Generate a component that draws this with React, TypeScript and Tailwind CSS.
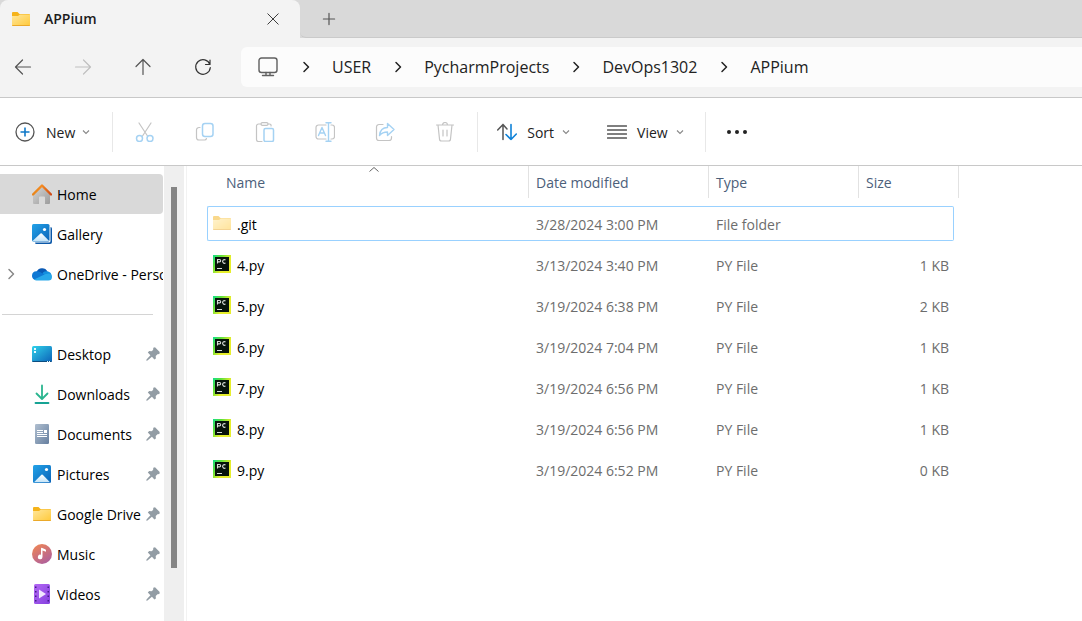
import React, { Fragment, type ReactNode } from "react";

type IconProps = { className?: string };

const FolderIcon = ({ faded = false }: { faded?: boolean }) => (
  <svg width="20" height="20" viewBox="0 0 20 20" className={faded ? "opacity-50" : ""} aria-hidden="true">
    <defs>
      <linearGradient id="folder-front" x1="0" y1="0" x2="1" y2="1">
        <stop offset="0" stopColor="#ffe79c" />
        <stop offset="1" stopColor="#ffc93a" />
      </linearGradient>
    </defs>
    <path d="M1 4a1 1 0 0 1 1-1h4.500l2 2H18a1 1 0 0 1 1 1v3H1z" fill="#f5b31a" />
    <path d="M1 7h6l2-1.500h10V16a1 1 0 0 1-1 1H2a1 1 0 0 1-1-1z" fill="url(#folder-front)" />
    <path d="M1 16a1 1 0 0 0 1 1h16a1 1 0 0 0 1-1z" fill="#eba92a" />
  </svg>
);

const PyCharmIcon = () => (
  <svg width="18" height="18" viewBox="0 0 18 18" aria-hidden="true">
    <defs>
      <linearGradient id="pc-edge" x1="0" y1="0" x2="0.700" y2="0.500">
        <stop offset="0" stopColor="#10e08c" />
        <stop offset="0.450" stopColor="#5be03a" />
        <stop offset="1" stopColor="#e6ee2c" />
      </linearGradient>
    </defs>
    <path d="M0 0h18v18H0z" fill="url(#pc-edge)" />
    <path d="M2 2h14v14H2z" fill="#06120a" />
    <path d="M4.500 8.500V4.500h2a1.200 1.200 0 0 1 0 2.400h-2M12.500 5a1.800 1.800 0 1 0 0 2.900" fill="none" stroke="#d8dcd8" strokeWidth="1.100" />
    <path d="M4 13.500h5" stroke="#d8dcd8" strokeWidth="1" />
  </svg>
);

const HomeIcon = () => (
  <svg width="20" height="20" viewBox="0 0 20 20" aria-hidden="true">
    <defs>
      <linearGradient id="home-wall" x1="0" y1="0" x2="1" y2="1">
        <stop offset="0" stopColor="#d6d6d6" />
        <stop offset="1" stopColor="#9c9c9c" />
      </linearGradient>
      <linearGradient id="home-roof" x1="0" y1="0" x2="1" y2="0">
        <stop offset="0" stopColor="#e8861c" />
        <stop offset="0.500" stopColor="#f58a1f" />
        <stop offset="1" stopColor="#cf4a18" />
      </linearGradient>
    </defs>
    <path d="M10 2 18 9.500V19a1 1 0 0 1-1 1h-4v-6.500a1 1 0 0 0-1-1H8a1 1 0 0 0-1 1V20H2a1 1 0 0 1-1-1V9.500z" fill="url(#home-wall)" />
    <path d="m1 10.500 9-9 9 9" fill="none" stroke="url(#home-roof)" strokeWidth="2.400" strokeLinecap="round" strokeLinejoin="round" />
  </svg>
);

const PictureIcon = ({ stacked = false }: { stacked?: boolean }) => (
  <svg width="20" height="20" viewBox="0 0 20 20" aria-hidden="true">
    <defs>
      <linearGradient id="pic-sky" x1="0" y1="0" x2="1" y2="1">
        <stop offset="0" stopColor="#23a3e8" />
        <stop offset="1" stopColor="#0a63b8" />
      </linearGradient>
      <linearGradient id="pic-hill" x1="0" y1="0" x2="0" y2="1">
        <stop offset="0" stopColor="#fff" />
        <stop offset="1" stopColor="#c4e4f8" />
      </linearGradient>
    </defs>
    {stacked ? (
      <>
        <path d="M18.500 3a1.500 1.500 0 0 1 1.500 1.500V18a2 2 0 0 1-2 2H4.500A1.500 1.500 0 0 1 3 18.500z" fill="#0b58a8" />
        <rect x="0" y="0" width="18.500" height="18.500" rx="1.500" fill="#fff" />
        <rect x="0" y="0" width="17.500" height="17.500" rx="1.500" fill="url(#pic-sky)" />
        <path d="m0.500 17 8-7.500a1 1 0 0 1 1.300 0l7.400 7.500z" fill="url(#pic-hill)" />
        <circle cx="12.500" cy="5.500" r="1.600" fill="#fff" />
      </>
    ) : (
      <>
        <rect x="1" y="1" width="18" height="18" rx="1.500" fill="url(#pic-sky)" />
        <path d="m2 18.300 7.400-7.500a1 1 0 0 1 1.300 0l7.300 7.500z" fill="url(#pic-hill)" />
        <circle cx="14.500" cy="5.500" r="1.600" fill="#fff" />
      </>
    )}
  </svg>
);

const OneDriveIcon = () => (
  <svg width="20" height="20" viewBox="0 0 20 20" aria-hidden="true">
    <path d="M4.500 8a6 6 0 0 1 11-.500L12 13z" fill="#0a5ab5" />
    <path d="M14.500 7.200A4.800 4.800 0 0 1 19.500 13L10 12l1-3.500a5 5 0 0 1 3.500-1.300z" fill="#1490df" />
    <path d="M4.500 7.200a6 6 0 0 1 4 1.100L15 12l-6 4H4a4 4 0 0 1-4-4.300 4.600 4.600 0 0 1 4.500-4.500z" fill="#0f78d4" />
    <path d="M2 15.500 13 10.300a5.500 5.500 0 0 1 2.500-.600 3.500 3.500 0 0 1 4.500 3.300 3.600 3.600 0 0 1-3.600 3.500H4.500a4 4 0 0 1-2.500-1z" fill="#28a8ea" />
  </svg>
);

const DesktopIcon = () => (
  <svg width="20" height="20" viewBox="0 0 20 20" aria-hidden="true">
    <defs>
      <linearGradient id="desk-bg" x1="0" y1="0" x2="1" y2="1">
        <stop offset="0" stopColor="#30d2ea" />
        <stop offset="1" stopColor="#0c62b8" />
      </linearGradient>
    </defs>
    <rect x="0" y="2" width="20" height="16" rx="1.500" fill="url(#desk-bg)" />
    <path d="M0 17h20a1.500 1.500 0 0 1-1.500 1h-17A1.500 1.500 0 0 1 0 17z" fill="#0c4d80" />
    <path d="M2 4h2v2H2zM2 7h2v2H2zM15 17h1v1h-1zM17 17h1v1h-1z" fill="#e6fbff" />
  </svg>
);

const DownloadIcon = () => (
  <svg width="20" height="20" viewBox="0 0 20 20" fill="none" strokeWidth="1.800" strokeLinecap="round" strokeLinejoin="round" aria-hidden="true">
    <path d="M10 1.500v13M4.500 9.500l5.500 5.500 5.500-5.500" stroke="#2ab58f" />
    <path d="M3.500 19h13" stroke="#16a394" />
  </svg>
);

const DocumentIcon = () => (
  <svg width="20" height="20" viewBox="0 0 20 20" aria-hidden="true">
    <defs>
      <linearGradient id="doc-bg" x1="0" y1="0" x2="1" y2="1">
        <stop offset="0" stopColor="#b0bfd0" />
        <stop offset="1" stopColor="#667f9f" />
      </linearGradient>
    </defs>
    <rect x="3" y="0" width="14" height="20" rx="1.200" fill="url(#doc-bg)" />
    <path d="M5 6.500h6M5 8.500h6M5 10.500h10M5 12.500h10" stroke="#fff" strokeWidth="1" />
    <path d="M12 6h3v3h-3z" fill="#fff" />
  </svg>
);

const MusicIcon = () => (
  <svg width="20" height="20" viewBox="0 0 20 20" aria-hidden="true">
    <defs>
      <linearGradient id="music-bg" x1="0.200" y1="0" x2="0.800" y2="1">
        <stop offset="0" stopColor="#ee8556" />
        <stop offset="1" stopColor="#ab5ea0" />
      </linearGradient>
    </defs>
    <circle cx="10" cy="10" r="10" fill="url(#music-bg)" />
    <path d="M9 4.500c0-.700.600-.900 1.200-.600l3 1.300c.500.200.800.500.800 1v1.500L10.500 6.500V13A2.300 2.300 0 1 1 9 10.800z" fill="#fff" />
  </svg>
);

const VideoIcon = () => (
  <svg width="20" height="20" viewBox="0 0 20 20" aria-hidden="true">
    <defs>
      <linearGradient id="video-bg" x1="0" y1="0" x2="1" y2="1">
        <stop offset="0" stopColor="#b468f4" />
        <stop offset="1" stopColor="#8440de" />
      </linearGradient>
    </defs>
    <rect x="2" y="0" width="16" height="20" rx="1.500" fill="url(#video-bg)" />
    <path d="M3 2.500h1.500V4H3zM3 7h1.500v1.500H3zM3 11.500h1.500V13H3zM3 16h1.500v1.500H3zM15.500 2.500H17V4h-1.500zM15.500 7H17v1.500h-1.500zM15.500 11.500H17V13h-1.500zM15.500 16H17v1.500h-1.500z" fill="#421c87" />
    <path d="M7 5.500v9l7-4.500z" fill="#f1e8ff" />
  </svg>
);

const PinIcon = () => (
  <svg width="14" height="14" viewBox="0 0 14 14" className="shrink-0" aria-hidden="true">
    <path d="M7.300.800 9 0.300 13.700 5l-.300 1.900-1.900.300-1.800 1.800.200 2.400-1.500 1.200L5.900 9.800 1.500 13.500.300 13.700l.200-1.200 3.900-4.200-2.600-2.700 1.400-1.500 2.300.200L7.100 2.900z" fill="#929ca4" />
  </svg>
);

const Line = ({ size = 20, stroke = "#555", children }: { size?: number; stroke?: string; children: ReactNode }) => (
  <svg width={size} height={size} viewBox="0 0 20 20" fill="none" stroke={stroke} strokeWidth="1.200" strokeLinecap="round" strokeLinejoin="round" className="shrink-0" aria-hidden="true">
    {children}
  </svg>
);

const Chevron = ({ className = "" }: IconProps) => (
  <svg width="10" height="12" viewBox="0 0 10 12" fill="none" stroke="currentColor" strokeWidth="1.500" strokeLinecap="round" strokeLinejoin="round" className={className} aria-hidden="true">
    <path d="m3 1.500 4.500 4.500L3 10.500" />
  </svg>
);

const ChevronDown = () => (
  <svg width="8" height="8" viewBox="0 0 8 8" fill="none" stroke="#888" strokeWidth="1.100" className="shrink-0" aria-hidden="true">
    <path d="m1 2.500 3 3 3-3" />
  </svg>
);

const GRAY = "#c4c4c4";
const BLUE = "#a5d2f3";

const fileActions: { label: string; icon: ReactNode }[] = [
  {
    label: "Cut",
    icon: (
      <Line stroke={GRAY}>
        <path d="m4 1 8.500 13M16 1 7.500 14" />
        <g stroke={BLUE} strokeWidth="1.500">
          <circle cx="4.500" cy="16.500" r="3" />
          <circle cx="15" cy="16.500" r="3" />
        </g>
      </Line>
    ),
  },
  {
    label: "Copy",
    icon: (
      <Line stroke={GRAY}>
        <path d="M5 5.500H4A2.500 2.500 0 0 0 1.500 8v7.500A2.500 2.500 0 0 0 4 18h5.500a2 2 0 0 0 2-1.500" />
        <rect x="7.500" y="1.500" width="10.500" height="13" rx="2.500" stroke={BLUE} strokeWidth="1.500" />
      </Line>
    ),
  },
  {
    label: "Paste",
    icon: (
      <Line stroke={GRAY}>
        <path d="M6 2H3.500A2 2 0 0 0 1.500 4v13.500a2 2 0 0 0 2 2H7M13 2h1.500a1.500 1.500 0 0 1 1.500 2" />
        <rect x="6" y="0.700" width="7" height="2.600" rx="1.300" />
        <rect x="9" y="6.500" width="9.500" height="13" rx="1.500" stroke={BLUE} strokeWidth="1.500" />
      </Line>
    ),
  },
  {
    label: "Rename",
    icon: (
      <Line stroke={GRAY}>
        <path d="M11 3H3.500A2.500 2.500 0 0 0 1 5.500v9A2.500 2.500 0 0 0 3.500 17H11M16 3h1a2.500 2.500 0 0 1 2.500 2.500v9A2.500 2.500 0 0 1 17 17h-1" />
        <path d="m3.500 13.500 3.500-8 3.500 8M4.800 11h4.400M11 .700h5M11 19.300h5M13.500 1v18" stroke={BLUE} strokeWidth="1.400" />
      </Line>
    ),
  },
  {
    label: "Share",
    icon: (
      <Line stroke={GRAY}>
        <path d="M8 2.500H4A2.500 2.500 0 0 0 1.500 5v11A2.500 2.500 0 0 0 4 18.500h10a2.500 2.500 0 0 0 2.500-2.500v-1.500" />
        <path d="M12.500 1.500v4C8 5.500 5 8.500 4.500 13.500c2.500-3 5-3.500 8-3.500v3.500l6.500-6z" stroke={BLUE} strokeWidth="1.400" />
      </Line>
    ),
  },
  {
    label: "Delete",
    icon: (
      <Line stroke={GRAY}>
        <path d="M1.500 3h17M7.500 3a2.500 2.500 0 0 1 5 0M3 3l1.500 14a2 2 0 0 0 2 2h7a2 2 0 0 0 2-2L17 3M8 8v6M12 8v6" />
      </Line>
    ),
  },
];

const crumbs = ["USER", "PycharmProjects", "DevOps1302", "APPium"];

const pinned: { label: string; icon: ReactNode }[] = [
  { label: "Desktop", icon: <DesktopIcon /> },
  { label: "Downloads", icon: <DownloadIcon /> },
  { label: "Documents", icon: <DocumentIcon /> },
  { label: "Pictures", icon: <PictureIcon /> },
  { label: "Google Drive", icon: <FolderIcon /> },
  { label: "Music", icon: <MusicIcon /> },
  { label: "Videos", icon: <VideoIcon /> },
];

const files = [
  { name: ".git", date: "3/28/2024 3:00 PM", type: "File folder", size: "" },
  { name: "4.py", date: "3/13/2024 3:40 PM", type: "PY File", size: "1 KB" },
  { name: "5.py", date: "3/19/2024 6:38 PM", type: "PY File", size: "2 KB" },
  { name: "6.py", date: "3/19/2024 7:04 PM", type: "PY File", size: "1 KB" },
  { name: "7.py", date: "3/19/2024 6:56 PM", type: "PY File", size: "1 KB" },
  { name: "8.py", date: "3/19/2024 6:56 PM", type: "PY File", size: "1 KB" },
  { name: "9.py", date: "3/19/2024 6:52 PM", type: "PY File", size: "0 KB" },
];

function SideItem({ label, icon, active = false, expandable = false, pin = false }: {
  label: string;
  icon: ReactNode;
  active?: boolean;
  expandable?: boolean;
  pin?: boolean;
}) {
  return (
    <li>
      <a href="#" className={`flex h-10 items-center rounded-r-sm ${active ? "bg-[#d9d9d9]" : ""}`}>
        <span className="flex w-8 shrink-0 pl-1.5">{expandable && <Chevron className="text-[#888]" />}</span>
        <span className="shrink-0">{icon}</span>
        <span className="ml-[5px] flex-1 overflow-hidden pt-0.5 whitespace-nowrap">{label}</span>
        {pin && <span className="mr-[3px] ml-[3px]"><PinIcon /></span>}
      </a>
    </li>
  );
}

function TabBar() {
  return (
    <div className="flex h-[38px] bg-[#d9d9d9]">
      <div className="flex w-[300px] items-center rounded-t-lg bg-[#f3f3f3] pr-[17px] pb-px pl-[11px]">
        <FolderIcon />
        <span className="ml-[13px] flex-1 text-sm font-semibold text-[#1b1b1b]">APPium</span>
        <button aria-label="Close tab" className="flex size-5 items-center justify-center">
          <Line size={16} stroke="#333"><path d="m3.500 3.500 13 13M16.500 3.500l-13 13" /></Line>
        </button>
      </div>
      <div className="flex flex-1 items-center rounded-bl-md border-b border-[#cacaca] pl-[19px]">
        <button aria-label="New tab" className="flex size-5 items-center justify-center">
          <Line size={16} stroke="#555"><path d="M10 3v14M3 10h14" strokeWidth="1.500" /></Line>
        </button>
      </div>
    </div>
  );
}

function NavBar() {
  const button = "flex size-10 items-center justify-center";
  return (
    <div className="flex h-[60px] items-center border-b border-[#c8c8c8] bg-[#f3f3f3] pb-px pl-[3px]">
      <div className="flex gap-5">
        <button aria-label="Back" className={button}><Line><path d="M17.500 10h-15M9.500 3l-7 7 7 7" /></Line></button>
        <button aria-label="Forward" disabled className={button}><Line stroke="#c0c0c0"><path d="M2.500 10h15M10.500 3l7 7-7 7" /></Line></button>
        <button aria-label="Up" className={button}><Line><path d="M10 17.500v-15M3 9.500l7-7 7 7" /></Line></button>
        <button aria-label="Refresh" className={button}><Line stroke="#333"><path d="M16.900 7.500A7.300 7.300 0 1 0 17.300 10.500M17 3v4.500h-4.500" /></Line></button>
      </div>
      <nav aria-label="Address" className="ml-[18px] flex h-10 flex-1 items-center rounded-l-md bg-[#fcfcfc] pl-4">
        <svg width="22" height="20" viewBox="0 0 22 20" fill="none" stroke="#606060" strokeWidth="1.400" strokeLinecap="round" className="shrink-0" aria-hidden="true">
          <rect x="2" y="1" width="18" height="14.500" rx="2.500" />
          <path d="M9 15.500V18M13 15.500V18M5.500 18.500h11" />
        </svg>
        {crumbs.map((crumb) => (
          <Fragment key={crumb}>
            <span className="flex w-[53px] justify-center text-[#222]">
              <Chevron />
            </span>
            <a href="#" className="text-base whitespace-nowrap text-[#222]">{crumb}</a>
          </Fragment>
        ))}
      </nav>
    </div>
  );
}

function CommandBar() {
  return (
    <div className="flex h-[68px] items-center border-b border-[#c8c8c8] pl-[15px] text-[#222]">
      <button className="flex items-center">
        <svg width="20" height="20" viewBox="0 0 20 20" fill="none" strokeWidth="1.300" aria-hidden="true">
          <circle cx="10" cy="10" r="9" stroke="#555" />
          <path d="M10 5.500v9M5.500 10h9" stroke="#0f78c8" strokeWidth="1.600" />
        </svg>
        <span className="mr-[7px] ml-[11px] pt-0.5">New</span>
        <ChevronDown />
      </button>
      <div className="ml-[22px] flex h-10 items-center gap-10 border-x border-[#e8e8e8] px-[22px]">
        {fileActions.map(({ label, icon }) => (
          <button key={label} aria-label={label} disabled>{icon}</button>
        ))}
      </div>
      <button className="ml-[19px] flex items-center">
        <Line>
          <path d="M6 17.500v-15M.700 8 6 2.500l4 4.500" strokeWidth="1.500" />
          <path d="M14 2.500v15M9 12.500l5 5 5.300-5.500" stroke="#0f82d8" strokeWidth="1.600" />
        </Line>
        <span className="mr-2 ml-2.5 pt-0.5">Sort</span>
        <ChevronDown />
      </button>
      <button className="ml-[37px] flex items-center">
        <Line><path d="M.500 4h19M.500 8h19M.500 12h19M.500 16h19" strokeWidth="1.300" /></Line>
        <span className="mr-2 ml-2.5 pt-0.5">View</span>
        <ChevronDown />
      </button>
      <div className="ml-[21px] flex h-10 items-center border-l border-[#e8e8e8] pl-5">
        <button aria-label="More">
          <svg width="22" height="20" viewBox="0 0 22 20" fill="#222" aria-hidden="true">
            <circle cx="3" cy="10" r="2" /><circle cx="11" cy="10" r="2" /><circle cx="19" cy="10" r="2" />
          </svg>
        </button>
      </div>
    </div>
  );
}

function Sidebar() {
  return (
    <aside className="flex shrink-0">
      <nav aria-label="Folders" className="w-[164px] pt-2 pr-px text-black">
        <ul>
          <SideItem label="Home" icon={<HomeIcon />} active />
          <SideItem label="Gallery" icon={<PictureIcon stacked />} />
          <SideItem label="OneDrive - Personal" icon={<OneDriveIcon />} expandable />
        </ul>
        <hr className="mt-5 mr-2.5 mb-[19px] ml-0.5 border-[#d4d4d4]" />
        <ul>
          {pinned.map((item) => <SideItem key={item.label} {...item} pin />)}
        </ul>
      </nav>
      <div className="w-5 bg-[#efefef] pt-[21px] pl-[7px]">
        <div className="h-[381px] w-1.5 bg-[#858585]" />
      </div>
    </aside>
  );
}

function FileTable() {
  const header = "p-0 text-left align-top font-normal";
  const headerBox = "flex h-8 items-center border-r border-[#e2e2e2] pt-px";
  return (
    <main className="ml-0.5 flex-1 border-l border-[#f2f2f2] pl-5">
      <table className="w-[752px] table-fixed border-collapse">
        <thead className="text-[#4c607a]">
          <tr className="h-[37px]">
            <th className={`${header} w-[322px]`}>
              <div className={`${headerBox} relative pl-[19px]`}>
                Name
                <svg width="12" height="7" viewBox="0 0 12 7" fill="none" stroke="#666" className="absolute top-0 left-1/2" aria-hidden="true">
                  <path d="m1.500 5.500 4.500-4 4.500 4" />
                </svg>
              </div>
            </th>
            <th className={`${header} w-[180px]`}><div className={`${headerBox} pl-[7px]`}>Date modified</div></th>
            <th className={`${header} w-[150px]`}><div className={`${headerBox} pl-[7px]`}>Type</div></th>
            <th className={`${header} w-[100px]`}><div className={`${headerBox} pl-[7px]`}>Size</div></th>
          </tr>
        </thead>
        <tbody className="text-[#6d6d6d]">
          {files.map((file, i) => {
            const box = `flex h-[35px] items-center border-y pt-0.5 ${i === 0 ? "border-[#99d1ff]" : "border-transparent"}`;
            return (
              <tr key={file.name} className="h-[41px]">
                <td className="p-0">
                  <div className={`${box} rounded-l-xs border-l pl-[5px] text-black`}>
                    <span className={`mr-1 flex w-5 shrink-0 pb-1 ${i === 0 ? "-ml-px mr-[5px]" : ""}`}>
                      {i === 0 ? <FolderIcon faded /> : <PyCharmIcon />}
                    </span>
                    {file.name}
                  </div>
                </td>
                <td className="p-0"><div className={`${box} pl-[7px]`}>{file.date}</div></td>
                <td className="p-0"><div className={`${box} pl-[7px]`}>{file.type}</div></td>
                <td className="p-0"><div className={`${box} mr-[5px] justify-end rounded-r-xs border-r pr-1`}>{file.size}</div></td>
              </tr>
            );
          })}
        </tbody>
      </table>
    </main>
  );
}

export default function App() {
  return (
    <div className="flex min-h-screen flex-col bg-white font-['Open_Sans','Noto_Sans',sans-serif] text-sm">
      <TabBar />
      <NavBar />
      <CommandBar />
      <div className="flex flex-1">
        <Sidebar />
        <FileTable />
      </div>
    </div>
  );
}
